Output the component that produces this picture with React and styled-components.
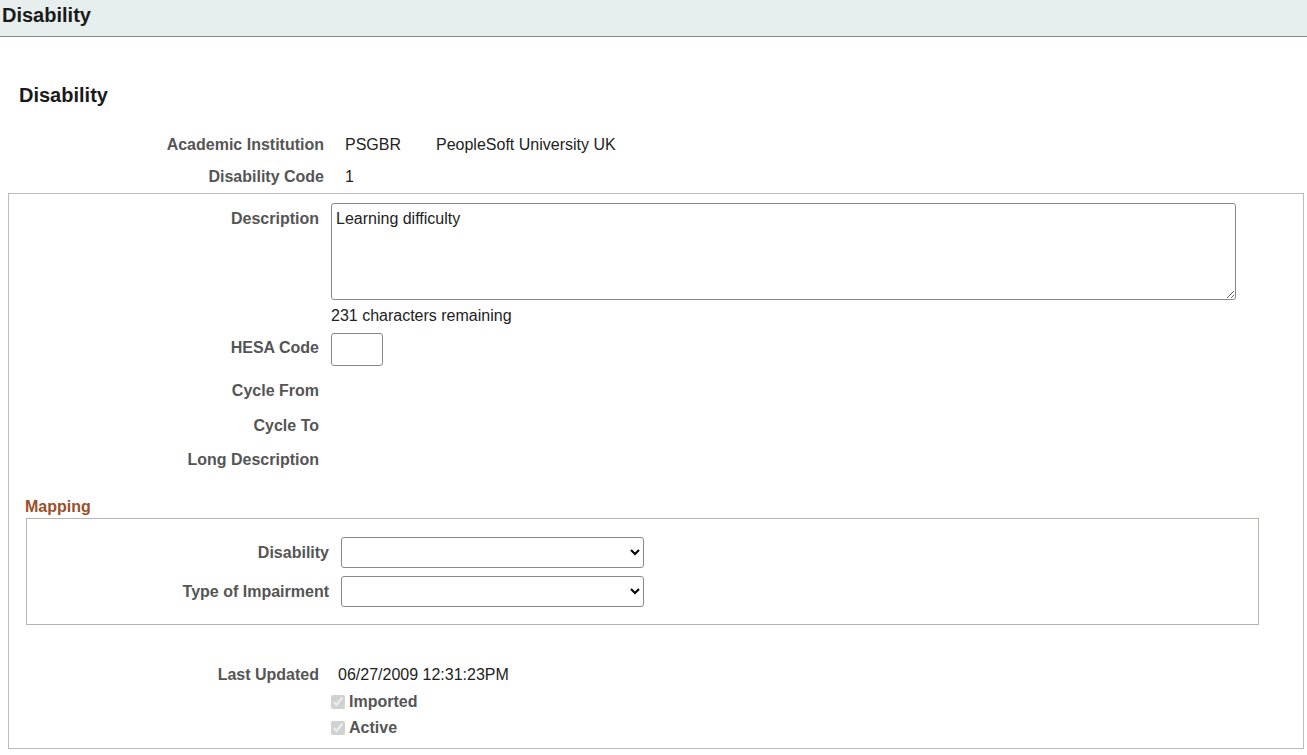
import React from 'react';
import styled, { createGlobalStyle } from 'styled-components';

const GlobalStyle = createGlobalStyle`
  body {
    margin: 0;
    font-family: "Liberation Sans", Arial, sans-serif;
    font-size: 16px;
    color: #222;
    background: #fff;
  }
`;

const PageBar = styled.div`
  height: 37px;
  background: #e7efee;
  border-bottom: 1px solid #8a8a8a;
  display: flex;
  align-items: center;
  padding-left: 2px;
  padding-bottom: 6px;
  box-sizing: border-box;
  h1 {
    margin: 0;
    font-size: 20px;
    font-weight: bold;
    color: #1a1a1a;
  }
`;

const Heading = styled.h2`
  margin: 47px 0 0 19px;
  font-size: 20px;
  line-height: 23px;
  font-weight: bold;
  color: #1a1a1a;
`;

const KeyGrid = styled.div`
  margin-top: 22px;
  display: grid;
  grid-template-columns: 324px auto;
  column-gap: 21px;
  grid-auto-rows: 32px;
  align-items: center;
`;

const Label = styled.div`
  font-weight: bold;
  color: #555;
  text-align: right;
  line-height: 18px;
  white-space: nowrap;
  padding-top: ${p => p.$top || 0}px;
  align-self: ${p => (p.$top ? 'start' : 'center')};
`;

const Value = styled.div`
  display: flex;
  color: #222;
  line-height: 18px;
  padding-left: ${p => p.$indent || 0}px;
`;

const Code = styled.span`
  width: 91px;
`;

const Panel = styled.div`
  margin: 0 3px 0 8px;
  border: 1px solid #bcbcbc;
  padding: 9px 0 7px;
`;

const Row = styled.div`
  display: grid;
  grid-template-columns: ${p => p.$labelWidth || 310}px 1fr;
  column-gap: 12px;
  align-items: center;
  min-height: ${p => p.$height || 0}px;
  margin-top: ${p => p.$gap || 0}px;
`;

const Memo = styled.textarea`
  display: block;
  width: 905px;
  height: 97px;
  box-sizing: border-box;
  border: 1px solid #888;
  border-radius: 3px;
  padding: 6px 4px;
  font-family: inherit;
  font-size: 16px;
  line-height: 18px;
  color: #222;
  resize: both;
`;

const Counter = styled.div`
  line-height: 18px;
  color: #222;
`;

const CodeInput = styled.input`
  display: block;
  width: 52px;
  height: 33px;
  box-sizing: border-box;
  border: 1px solid #888;
  border-radius: 3px;
`;

const GroupTitle = styled.div`
  margin: 21px 0 0 16px;
  font-weight: bold;
  color: #9b4f2a;
  line-height: 18px;
`;

const GroupBox = styled.div`
  margin: 2px 44px 0 17px;
  border: 1px solid #b9b5ae;
  padding: 18px 0 17px;
  display: flex;
  flex-direction: column;
  gap: 8px;
`;

const Dropdown = styled.select`
  display: block;
  width: 303px;
  height: 31px;
  box-sizing: border-box;
  border: 1px solid #888;
  border-radius: 3px;
  background: #fff;
  font-family: inherit;
  font-size: 16px;
`;

const Check = styled.label`
  display: flex;
  align-items: center;
  gap: 4px;
  font-weight: bold;
  color: #555;
  line-height: 18px;
  input {
    margin: 0;
    width: 14px;
    height: 14px;
  }
`;

export default function App() {
  return (
    <>
      <GlobalStyle />
      <PageBar>
        <h1>Disability</h1>
      </PageBar>
      <Heading>Disability</Heading>
      <KeyGrid>
        <Label>Academic Institution</Label>
        <Value>
          <Code>PSGBR</Code>
          <span>PeopleSoft University UK</span>
        </Value>
        <Label>Disability Code</Label>
        <Value>1</Value>
      </KeyGrid>
      <Panel>
        <Row>
          <Label $top={7}>Description</Label>
          <Memo defaultValue="Learning difficulty" />
        </Row>
        <Row $gap={7}>
          <span />
          <Counter>231 characters remaining</Counter>
        </Row>
        <Row $gap={8}>
          <Label $top={6}>HESA Code</Label>
          <div>
            <CodeInput type="text" />
          </div>
        </Row>
        <Row $gap={7} $height={35}>
          <Label>Cycle From</Label>
          <span />
        </Row>
        <Row $height={35}>
          <Label>Cycle To</Label>
          <span />
        </Row>
        <Row $height={34}>
          <Label>Long Description</Label>
          <span />
        </Row>
        <GroupTitle>Mapping</GroupTitle>
        <GroupBox>
          <Row $labelWidth={302}>
            <Label>Disability</Label>
            <div>
              <Dropdown defaultValue="">
                <option value=""></option>
              </Dropdown>
            </div>
          </Row>
          <Row $labelWidth={302}>
            <Label>Type of Impairment</Label>
            <div>
              <Dropdown defaultValue="">
                <option value=""></option>
              </Dropdown>
            </div>
          </Row>
        </GroupBox>
        <Row $gap={37} $height={26}>
          <Label>Last Updated</Label>
          <Value $indent={7}>06/27/2009 12:31:23PM</Value>
        </Row>
        <Row $gap={1} $height={26}>
          <span />
          <Check>
            <input type="checkbox" checked disabled readOnly />
            Imported
          </Check>
        </Row>
        <Row $height={26}>
          <span />
          <Check>
            <input type="checkbox" checked disabled readOnly />
            Active
          </Check>
        </Row>
      </Panel>
    </>
  );
}
